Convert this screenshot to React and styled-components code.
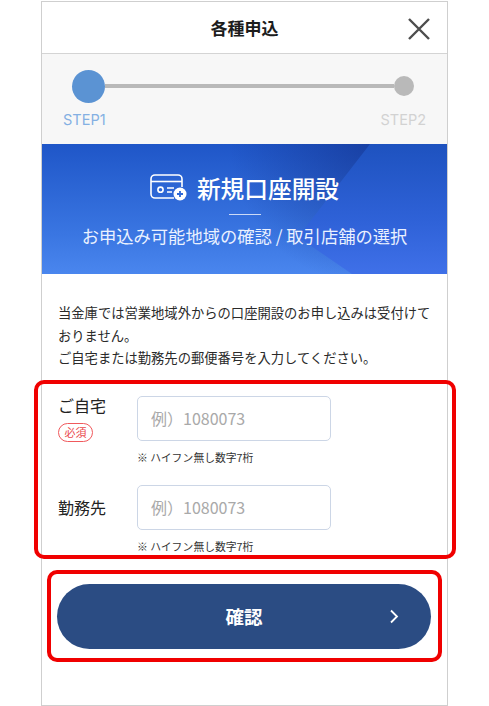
import React from 'react'
import styled, { createGlobalStyle } from 'styled-components'

const GlobalStyle = createGlobalStyle`
  html, body {
    margin: 0;
    padding: 0;
    background: #fff;
  }
  body {
    font-family: "Noto Sans CJK JP", "Noto Sans", sans-serif;
    color: #222;
  }
  * {
    box-sizing: border-box;
  }
`

const Page = styled.div`
  position: relative;
  width: 489px;
  height: 706px;
  overflow: hidden;
  padding-top: 1px;
`

const Frame = styled.div`
  width: 407px;
  height: 705px;
  margin-left: 41px;
  border: 1px solid #cfcfcf;
  display: flex;
  flex-direction: column;
`

const Header = styled.header`
  position: relative;
  height: 52px;
  flex: none;
  display: flex;
  align-items: center;
  justify-content: center;
  border-bottom: 1px solid #d4d4d4;
  font-size: 17px;
  font-weight: 700;
  color: #1c1c1c;
`

const CloseIcon = styled.svg`
  position: absolute;
  top: 15px;
  right: 16px;
  width: 24px;
  height: 24px;
`

const Stepper = styled.section`
  height: 90px;
  flex: none;
  background: #f7f7f7;
  padding: 15px 21px 0;
`

const Track = styled.div`
  height: 34px;
  margin: 0 12px 0 9px;
  display: flex;
  align-items: center;
`

const Dot = styled.span`
  flex: none;
  width: ${(p) => (p.$active ? 33 : 20)}px;
  height: ${(p) => (p.$active ? 33 : 20)}px;
  border-radius: 50%;
  background: ${(p) => (p.$active ? '#5b93d3' : '#b9b9b9')};
`

const Line = styled.span`
  flex: 1;
  height: 4px;
  background: #b9b9b9;
`

const StepLabels = styled.div`
  display: flex;
  justify-content: space-between;
  margin-top: 7px;
  font-family: "Inter", "Liberation Sans", sans-serif;
  font-size: 14.5px;
  line-height: 20px;
`

const StepLabel = styled.span`
  color: ${(p) => (p.$active ? '#84b0e3' : '#d2d2d2')};
`

const Hero = styled.section`
  position: relative;
  isolation: isolate;
  height: 130px;
  flex: none;
  color: #fff;
  display: flex;
  flex-direction: column;
  align-items: center;
  background:
    radial-gradient(circle at 328px 0, rgba(20, 50, 140, 0.6), transparent 140px),
    linear-gradient(180deg, #1f56c8 0%, #3a76e2 70%, #4a86ee 100%);

  &::before {
    content: '';
    position: absolute;
    inset: 0;
    z-index: -1;
    background: linear-gradient(180deg, #1e52bf 0%, #2f62d8 60%, #3f70e8 100%);
    clip-path: polygon(328px 0, 405px 0, 405px 130px, 310px 130px, 256px 93px);
  }
`

const HeroTitle = styled.div`
  display: flex;
  align-items: center;
  gap: 10px;
  margin-top: 26px;
  height: 36px;
  font-size: 23.7px;
  font-weight: 500;
`

const HeroRule = styled.span`
  width: 32px;
  height: 1px;
  margin-top: 8px;
  background: rgba(255, 255, 255, 0.75);
`

const HeroSub = styled.div`
  margin-top: 9px;
  font-size: 17.3px;
  line-height: 24px;
  font-weight: 400;
  color: #eaf1ff;
  white-space: nowrap;
`

const Notice = styled.p`
  margin: 0;
  padding: 28px 16px 0;
  font-size: 13.3px;
  line-height: 22.5px;
  color: #2a2a2a;
  white-space: nowrap;
`

const Form = styled.form`
  margin-top: 26px;
  padding: 0 16px;
`

const Field = styled.div`
  display: grid;
  grid-template-columns: 79px 194px;
  height: ${(p) => (p.$last ? 'auto' : '89px')};
`

const FieldLabel = styled.div`
  display: flex;
  flex-direction: column;
  align-items: flex-start;
  margin-top: -1px;
  padding-top: ${(p) => (p.$centered ? 13 : 0)}px;
  font-size: 16px;
  line-height: 20px;
  color: #222;
`

const Required = styled.span`
  margin-top: 8px;
  width: 35px;
  height: 19px;
  border: 1px solid #f0595c;
  border-radius: 10px;
  font-size: 11px;
  line-height: 16px;
  text-align: center;
  color: #ea4a4d;
`

const Input = styled.input`
  width: 194px;
  height: 45px;
  padding: 0 13px;
  border: 1px solid #ccd6e6;
  border-radius: 5px;
  outline: none;
  background: #fff;
  font-family: "Noto Sans CJK JP", sans-serif;
  font-size: 16px;
  &::placeholder {
    color: #a9a9a9;
    opacity: 1;
  }
`

const Hint = styled.div`
  margin-top: 9px;
  font-size: 10.8px;
  line-height: 15px;
  color: #333;
  white-space: nowrap;
`

const Submit = styled.button`
  position: relative;
  display: block;
  width: 374px;
  height: 65px;
  margin: 30px 0 0 15px;
  padding: 0;
  border: none;
  border-radius: 33px;
  background: #2b4c83;
  color: #fff;
  font-family: "Noto Sans CJK JP", sans-serif;
  font-size: 18.5px;
  font-weight: 700;
`

const Chevron = styled.svg`
  position: absolute;
  top: 25px;
  right: 31px;
  width: 12px;
  height: 15px;
`

const Highlight = styled.div`
  position: absolute;
  left: ${(p) => p.$x}px;
  top: ${(p) => p.$y}px;
  width: ${(p) => p.$w}px;
  height: ${(p) => p.$h}px;
  border: 4px solid #f00000;
  border-radius: 10px;
  pointer-events: none;
`

const CardPlusIcon = () => (
  <svg width="37" height="28" viewBox="0 0 37 28" fill="none" stroke="#fff" strokeWidth="1.6">
    <path d="M24 24H5a4 4 0 0 1-4-4V5a4 4 0 0 1 4-4h23a4 4 0 0 1 4 4v8" />
    <path d="M1 7.5h31" />
    <circle cx="10.5" cy="15.7" r="2.6" />
    <path d="M17 14h7M17 18h5" />
    <circle cx="30" cy="20" r="6.5" fill="#fff" stroke="none" />
    <path d="M30 17v6M27 20h6" stroke="#2e68d6" strokeWidth="1.8" />
  </svg>
)

const App = () => (
  <Page>
    <GlobalStyle />
    <Frame>
      <Header>
        各種申込
        <CloseIcon viewBox="0 0 24 24" fill="none" stroke="#4d4d4d" strokeWidth="2.4">
          <path d="M2 2l20 20M22 2L2 22" />
        </CloseIcon>
      </Header>
      <Stepper>
        <Track>
          <Dot $active />
          <Line />
          <Dot />
        </Track>
        <StepLabels>
          <StepLabel $active>STEP1</StepLabel>
          <StepLabel>STEP2</StepLabel>
        </StepLabels>
      </Stepper>
      <Hero>
        <HeroTitle>
          <CardPlusIcon />
          新規口座開設
        </HeroTitle>
        <HeroRule />
        <HeroSub>お申込み可能地域の確認 / 取引店舗の選択</HeroSub>
      </Hero>
      <Notice>
        当金庫では営業地域外からの口座開設のお申し込みは受付けて
        <br />
        おりません。
        <br />
        ご自宅または勤務先の郵便番号を入力してください。
      </Notice>
      <Form>
        <Field>
          <FieldLabel>
            ご自宅
            <Required>必須</Required>
          </FieldLabel>
          <div>
            <Input placeholder="例）1080073" />
            <Hint>※ ハイフン無し数字7桁</Hint>
          </div>
        </Field>
        <Field $last>
          <FieldLabel $centered>勤務先</FieldLabel>
          <div>
            <Input placeholder="例）1080073" />
            <Hint>※ ハイフン無し数字7桁</Hint>
          </div>
        </Field>
      </Form>
      <Submit type="button">
        確認
        <Chevron viewBox="0 0 12 15" fill="none" stroke="#fff" strokeWidth="1.8">
          <path d="M3 1.5l6 6-6 6" />
        </Chevron>
      </Submit>
    </Frame>
    <Highlight $x={34} $y={380} $w={422} $h={179} />
    <Highlight $x={47} $y={570} $w={395} $h={92} />
  </Page>
)

export default App
